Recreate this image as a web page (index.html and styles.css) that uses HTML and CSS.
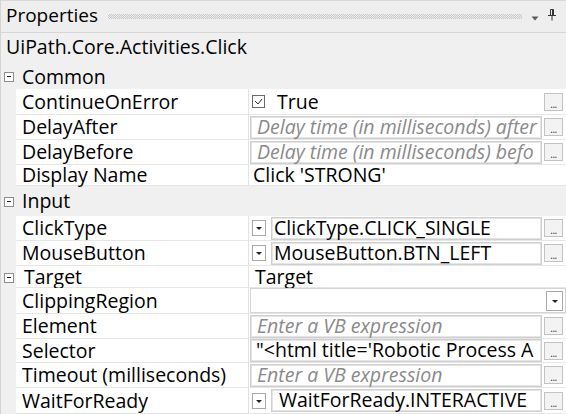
FILE: index.html
```html
<!DOCTYPE html>
<html lang="en">
<head>
    <meta charset="UTF-8">
    <title>Properties</title>
    <link rel="stylesheet" href="styles.css">
</head>
<body>
    <div class="panel">
        <div class="titlebar">
            <span class="title">Properties</span>
            <span class="grip"></span>
            <svg class="menu-arrow" width="8" height="5" viewBox="0 0 8 5"><path d="M0.5 0.5h7L4 4.5z" fill="#5a5a5a"/></svg>
            <svg class="pin" width="10" height="12" viewBox="0 0 10 12"><path d="M3.5 0.5h3v6h-3z M1 6.5h8 M5 6.5v5" stroke="#333" fill="none"/><path d="M5.5 1v5" stroke="#333"/></svg>
        </div>

        <div class="desc">UiPath.Core.Activities.Click</div>

        <div class="category cat-common"><span class="toggle"></span><span>Common</span></div>

        <div class="row r26">
            <div class="name">ContinueOnError</div>
            <div class="value">
                <span class="check"><svg width="9" height="7" viewBox="0 0 9 7"><path d="M1 3l3 3 4-5" stroke="#333" fill="none"/></svg></span>
                <span class="text plain-true">True</span>
                <span class="dots">...</span>
            </div>
        </div>
        <div class="row r25">
            <div class="name">DelayAfter</div>
            <div class="value">
                <span class="box hint">Delay time (in milliseconds) after</span>
                <span class="dots">...</span>
            </div>
        </div>
        <div class="row r25">
            <div class="name">DelayBefore</div>
            <div class="value">
                <span class="box hint">Delay time (in milliseconds) befo</span>
                <span class="dots">...</span>
            </div>
        </div>
        <div class="row r21">
            <div class="name">Display Name</div>
            <div class="value"><span class="text plain">Click 'STRONG'</span></div>
        </div>

        <div class="category cat-input"><span class="toggle"></span><span>Input</span></div>

        <div class="row r25">
            <div class="name">ClickType</div>
            <div class="value">
                <span class="drop"></span>
                <span class="box">ClickType.CLICK_SINGLE</span>
                <span class="dots">...</span>
            </div>
        </div>
        <div class="row r25">
            <div class="name">MouseButton</div>
            <div class="value">
                <span class="drop"></span>
                <span class="box">MouseButton.BTN_LEFT</span>
                <span class="dots">...</span>
            </div>
        </div>
        <div class="row r22 group">
            <span class="toggle"></span>
            <div class="name">Target</div>
            <div class="value"><span class="text plain-target">Target</span></div>
        </div>
        <div class="row r26">
            <div class="name">ClippingRegion</div>
            <div class="value">
                <span class="combo"><span class="combo-btn"></span></span>
            </div>
        </div>
        <div class="row r25">
            <div class="name">Element</div>
            <div class="value">
                <span class="box hint">Enter a VB expression</span>
                <span class="dots">...</span>
            </div>
        </div>
        <div class="row r24">
            <div class="name">Selector</div>
            <div class="value">
                <span class="box">"&lt;html title='Robotic Process A</span>
                <span class="dots">...</span>
            </div>
        </div>
        <div class="row r25">
            <div class="name">Timeout (milliseconds)</div>
            <div class="value">
                <span class="box hint">Enter a VB expression</span>
                <span class="dots">...</span>
            </div>
        </div>
        <div class="row r26">
            <div class="name">WaitForReady</div>
            <div class="value">
                <span class="drop"></span>
                <span class="box wide-pad">WaitForReady.INTERACTIVE</span>
                <span class="dots">...</span>
            </div>
        </div>
    </div>
</body>
</html>
```

FILE: styles.css
```css
* {
    margin: 0;
    padding: 0;
    box-sizing: border-box;
}

body {
    font-family: 'Open Sans', 'Noto Sans', sans-serif;
    font-size: 19.5px;
    line-height: 20px;
    color: #000;
    background: #f0f0f0;
    width: 566px;
    height: 414px;
    overflow: hidden;
}

.panel {
    width: 566px;
    height: 414px;
    background: #f0f0f0;
    border-top: 1px solid #d9d9d9;
    border-left: 1px solid #d4d4d4;
}

/* title bar */
.titlebar {
    height: 32px;
    display: flex;
    align-items: center;
    border-bottom: 1px solid #d6d6d6;
    background: #eeeeee;
}

.title {
    padding-left: 5px;
    padding-right: 10px;
    line-height: 24px;
    margin-top: -4px;
    font-size: 19px;
}

.grip {
    flex: 1;
    height: 5px;
    margin-top: -1px;
    background-image: conic-gradient(#c6c6c6 25%, transparent 0 50%, #c6c6c6 0 75%, transparent 0);
    background-size: 2px 2px;
}

.menu-arrow {
    margin: 3px 8px 0 9px;
}

.pin {
    margin-right: 9px;
    margin-top: -4px;
}

.desc {
    height: 29px;
    padding-left: 5px;
    padding-top: 4px;
}

/* categories */
.category {
    display: flex;
    align-items: center;
    padding-left: 21px;
    position: relative;
}

.cat-common { height: 27px; padding-top: 2px; }
.cat-input { height: 30px; }

.toggle {
    position: absolute;
    left: 3px;
    top: 50%;
    width: 10px;
    height: 10px;
    margin-top: -4px;
    border: 1px solid #8e8e8e;
    background: #fff;
}

.toggle::after {
    content: '';
    position: absolute;
    left: 2px;
    top: 3px;
    width: 4px;
    height: 1px;
    background: #222;
}

/* property rows */
.row {
    display: flex;
    margin-left: 15px;
    position: relative;
}

.r21 { height: 21px; }
.r22 { height: 22px; }
.r24 { height: 24px; }
.r25 { height: 25px; }
.r26 { height: 26px; }

.row .toggle { left: -12px; }

.name {
    width: 233px;
    flex-shrink: 0;
    background: #fff;
    border-right: 1px solid #e2e2e2;
    border-bottom: 1px solid #e6e6e6;
    padding-left: 6px;
    display: flex;
    align-items: center;
    white-space: nowrap;
}

.group .name { padding-left: 8px; }

.value {
    flex: 1;
    min-width: 0;
    background: #fff;
    border-bottom: 1px solid #e6e6e6;
    display: flex;
    align-items: center;
    padding: 0 3px 0 1px;
    gap: 2px;
}

.text {
    flex: 1;
    white-space: nowrap;
}

.plain { padding-left: 3px; }
.plain-target { padding-left: 5px; }
.plain-true { padding-left: 10px; }

.box {
    flex: 1;
    min-width: 0;
    height: 23px;
    border: 1px solid #cfcfcf;
    box-shadow: inset 0 0 0 1px #e4e4e4;
    padding-left: 5px;
    line-height: 20px;
    white-space: nowrap;
}

.drop + .box { margin-left: 3px; padding-left: 2px; }
.drop + .wide-pad { padding-left: 7px; }

.hint {
    font-style: italic;
    color: #8a8a8a;
    padding-left: 6px;
}

.dots {
    width: 19px;
    height: 18px;
    flex-shrink: 0;
    border: 1px solid #c3c3c3;
    background: #f3f3f3;
    font-size: 10px;
    line-height: 20px;
    text-align: center;
    color: #334;
    letter-spacing: -0.5px;
    overflow: hidden;
}

.check {
    width: 13px;
    height: 13px;
    margin-left: 2px;
    border: 1px solid #6a6a6a;
    display: flex;
    align-items: center;
    justify-content: center;
    flex-shrink: 0;
}

.drop {
    width: 14px;
    height: 16px;
    margin-left: 2px;
    flex-shrink: 0;
    border: 1px solid #a8a8a8;
    background: #fff;
    position: relative;
}

.drop::after,
.combo-btn::after {
    content: '';
    position: absolute;
    left: 50%;
    top: 50%;
    margin-left: -3px;
    margin-top: -1px;
    border-left: 3px solid transparent;
    border-right: 3px solid transparent;
    border-top: 3px solid #222;
}

.combo {
    flex: 1;
    height: 25px;
    border: 1px solid #d4d4d4;
    display: flex;
    justify-content: flex-end;
    align-items: center;
    margin-right: -3px;
    padding-right: 2px;
}

.combo-btn {
    width: 17px;
    height: 20px;
    border: 1px solid #a8a8a8;
    position: relative;
}
```
